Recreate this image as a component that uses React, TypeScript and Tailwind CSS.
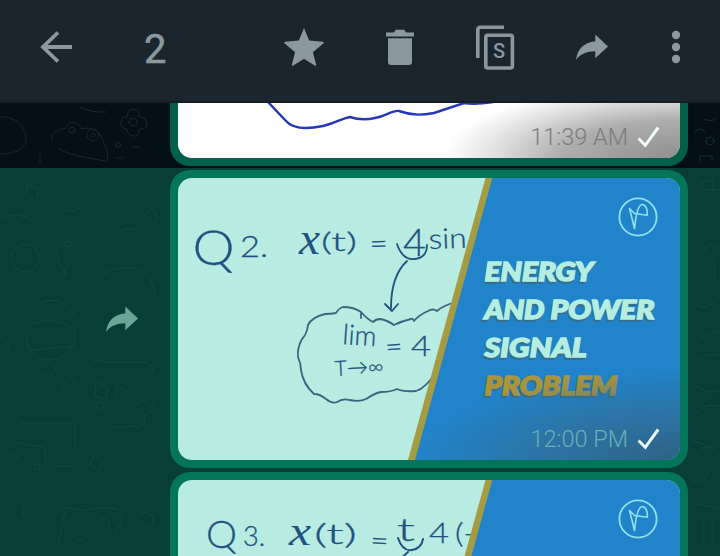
import React from "react";

const INK = "#1f5280";

function Doodles({ className = "", stroke }: { className?: string; stroke: string }) {
  return (
    <svg className={`pointer-events-none absolute inset-0 ${className}`} width="720" height="556" viewBox="0 0 720 556" fill="none" stroke={stroke} strokeWidth="1" strokeLinecap="round">
      <g stroke="#2b3f48">
        <path d="M0 117c14-1 25 8 26 22 0 8-8 15-26 15" />
        <path d="M52 140c-2-8 6-10 14-12 3-9 14-6 15 1 6-2 18 0 20 8 5 9 10 24 4 24-15-3-34-5-46-12M80 107q12 6 26 5" />
        <circle cx="93" cy="135" r="6" /><circle cx="93" cy="135" r="2" /><circle cx="72" cy="130" r="3" />
        <path d="M134 109q6 1 5 8 8 0 8 7-1 6-8 5 0 8-6 7-6-1-6-7-7 0-6-7 1-6 6-5 0-8 7-8z" />
        <circle cx="133" cy="122" r="4" /><circle cx="118" cy="145" r="2.5" /><path d="M132 147h7M116 157q4 3 7 0M40 154v9" />
      </g>
      <path d="M28 184l12 5-4 12-10-5zM60 207q12 9 22-1M115 235q8-10 22-5M145 216l8-9 5 13-10 5M3 218q13-8 29 3" />
      <circle cx="68" cy="244" r="3" /><circle cx="25" cy="258" r="14" /><path d="M56 249q2 16 10 25M65 276q0-13 12-16M98 281c6-15 42-20 52-1q5 8 5 15" />
      <path d="M36 306c12-11 33-5 38 9M26 331c2-15 48-12 49 2 0 33-47 38-49 4M28 350q22-1 45-4M0 335q11 8 10 20" />
      <path d="M91 365q4-7 13-3l40 0q9 0 9 10M43 374q12 4 13-7M62 388l7-11 8 8M96 382l12 5-2 12-11-3zM115 398l2-12 12 7M136 403q13-6 14 5" />
      <path d="M106 421q8 11 24 5 16 4 15-10 11-6 9-18M21 423h51q4 0 3 8v14M17 443l27 4q2 0 2 18M55 466h17" />
      <circle cx="100" cy="406" r="4" /><circle cx="37" cy="467" r="3" /><path d="M94 456l10 5-5 9-9-4zM11 453l8 5-5 6M64 508q10 0 20 3c16-6 38-4 38 3q0 12-7 20M65 511l-7 34M23 507v9M140 513q15-3 13 10l-10 8M97 521q12-7 13 7M74 543q6-7 11 0" />
      <path d="M704 119q9 4 12-1M695 132q6-6 10 0" /><circle cx="710" cy="141" r="4" /><path d="M700 161v-5h12v5M702 190h17M700 184l13-5v13M714 258v24M704 251q6-13 14-2M695 303q8 9 20-1M700 338l18-7M694 363q12-11 26-8M697 386q10 9 23 4" />
      <path d="M697 413q10-12 23-6M690 439l24 10M697 455c7-14 21-10 22 2M691 479q9 9 18-8M696 504l22 4M704 520v26M712 518v24" />
    </svg>
  );
}

function ForwardArrow({ className = "" }: { className?: string }) {
  return (
    <svg className={className} width="34" height="28" viewBox="0 0 34 28" fill="currentColor">
      <path d="M20.3 1.5 33 13.6 20.3 25.3v-7C11.5 18.4 5.5 21 1 27 2.3 16.3 8.5 9.6 20.3 8.3z" />
    </svg>
  );
}

function Header() {
  return (
    <header className="relative z-20 h-[103px] shrink-0 border-b-2 border-[#161d26] bg-[#1b252d] text-[#8b989f]">
      <div className="flex h-[94px] items-center">
        <svg className="ml-10" width="33" height="32" viewBox="0 0 33 32" fill="none" stroke="currentColor" strokeWidth="3.8">
          <path d="M18 1.5 3 16 18 30.5M2 16h30" />
        </svg>
        <span className="ml-[71px] w-6 pt-[5px] text-[40px] leading-none [-webkit-text-stroke:0.5px_currentColor]">2</span>
        <svg className="ml-[116px]" width="40" height="40" viewBox="0 0 40 40" fill="currentColor">
          <path d="m20 1 5.1 12.6 13.6 1.1c1.1.1 1.2 1 .5 1.7L28.9 25.2l3.2 12.2c.3 1.1-.6 1.7-1.5 1.1L20 31.8 9.4 38.5c-.9.6-1.8 0-1.5-1.1l3.2-12.2L.8 16.4c-.7-.7-.5-1.6.5-1.7l13.6-1.1z" />
        </svg>
        <svg className="ml-[61px]" width="30" height="38" viewBox="0 0 30 38" fill="currentColor">
          <path d="M1 4.5h7.8L11 1.7h8l2.2 2.8H29v4H1zM3 10.2h24V34q0 3-3 3H6q-3 0-3-3z" />
        </svg>
        <svg className="ml-[60px]" width="40" height="46" viewBox="0 0 40 46" fill="none" stroke="currentColor" strokeWidth="3.6">
          <path d="M2.8 34V6q0-2.8 2.8-2.8H29" />
          <rect x="10.8" y="11.2" width="26.6" height="32.8" rx="2" />
          <text x="24" y="34" textAnchor="middle" fill="currentColor" stroke="none" fontFamily="Roboto, sans-serif" fontSize="20" fontWeight="500">S</text>
        </svg>
        <ForwardArrow className="ml-[60px]" />
        <svg className="ml-[62px]" width="10" height="34" viewBox="0 0 10 34" fill="currentColor">
          <circle cx="5" cy="5" r="4.2" /><circle cx="5" cy="17" r="4.2" /><circle cx="5" cy="29" r="4.2" />
        </svg>
      </div>
    </header>
  );
}

function Stamp({ time, color }: { time: string; color: string }) {
  return (
    <div className="absolute right-[20px] bottom-[8px] flex items-center gap-[9px]">
      <span className={`text-[23.5px] leading-[26px] font-light whitespace-nowrap ${color}`}>{time}</span>
      <svg width="23" height="22" viewBox="0 0 23 22" fill="none" stroke="#eefcf9" strokeWidth="3">
        <path d="m1.5 12.5 6.8 6.8L21.2 1.5" />
      </svg>
    </div>
  );
}

function Logo() {
  return (
    <g fill="none" stroke="#8fe3ee" strokeLinecap="round" strokeLinejoin="round">
      <circle cx="638" cy="217" r="18.6" strokeWidth="1.8" />
      <path strokeWidth="1.6" d="M634.5 228.5 629.5 208.5 634.5 213.5 647.2 215.2C648 209 645.5 204.5 642 204.5 637.5 205.5 635.5 218 634.5 228.5" />
    </g>
  );
}

type InkTextProps = { x: number; y: number; size: number; length: number; children: string; serif?: boolean; rotate?: number };

function Ink({ x, y, size, length, children, serif, rotate = 0 }: InkTextProps) {
  return (
    <text
      x={x}
      y={y}
      fontSize={size}
      textLength={length}
      lengthAdjust="spacingAndGlyphs"
      fontFamily={serif ? "'Liberation Serif', serif" : "Lato, 'DejaVu Sans', sans-serif"}
      fontWeight={serif ? 400 : 300}
      fontStyle={serif ? "italic" : "normal"}
      fill={INK}
      stroke={INK}
      strokeWidth={serif ? 0 : 0.3}
      transform={`rotate(${rotate} ${x} ${y})`}
    >
      {children}
    </text>
  );
}

const titles = [
  { words: [{ text: "ENERGY", x: 484, length: 109 }], y: 281, color: "#b3eee0" },
  { words: [{ text: "AND", x: 484, length: 60 }, { text: "POWER", x: 550, length: 104 }], y: 319, color: "#b3eee0" },
  { words: [{ text: "SIGNAL", x: 484, length: 102 }], y: 357, color: "#b3eee0" },
  { words: [{ text: "PROBLEM", x: 484, length: 133 }], y: 395, color: "#a8953e" },
];

function Titles() {
  return (
    <g fontFamily="Lato, sans-serif" fontWeight="900" fontStyle="italic" fontSize="26.5">
      {titles.map((line) =>
        line.words.map((w) => (
          <g key={w.text}>
            <text x={w.x - 0.5} y={line.y + 1.5} textLength={w.length} lengthAdjust="spacingAndGlyphs" fill="#366e8b" stroke="#366e8b" strokeWidth="1.6">{w.text}</text>
            <text x={w.x + 0.5} y={line.y} textLength={w.length} lengthAdjust="spacingAndGlyphs" fill={line.color} stroke={line.color} strokeWidth="1.5">{w.text}</text>
          </g>
        )),
      )}
    </g>
  );
}

function Slide({ question }: { question: 2 | 3 }) {
  return (
    <svg className="block" width="502" height="282" viewBox="178 178 502 282">
      <rect x="178" y="178" width="502" height="282" fill="#b8ebe2" />
      {question === 2 ? (
        <g>
          <Ink x={192} y={264} size={48} length={42} rotate={2}>Q</Ink>
          <Ink x={240} y={257} size={29} length={28}>2.</Ink>
          <Ink x={299} y={254} size={46} length={21} serif>x</Ink>
          <Ink x={321} y={251} size={25} length={36}>(t)</Ink>
          <Ink x={370} y={254} size={29} length={18} rotate={-2}>=</Ink>
          <Ink x={403} y={256} size={37} length={23}>4</Ink>
          <Ink x={429} y={249} size={28} length={38} rotate={-2}>sin</Ink>
          <Ink x={342} y={344} size={28} length={34} rotate={4}>lim</Ink>
          <Ink x={335} y={376} size={21} length={49} rotate={-3}>T→∞</Ink>
          <Ink x={386} y={357} size={28} length={17} rotate={-4}>=</Ink>
          <Ink x={411} y={356} size={28} length={20}>4</Ink>
          <g fill="none" stroke={INK} strokeWidth="1.8" strokeLinecap="round" strokeLinejoin="round">
            <path d="M397 244c4 12 10 16 18 15 8-1 12-6 12-14M407 261c-12 11-16 27-16 47M385 304l7 7 6-7" />
            <path stroke="#3a6580" d="M456 302Q444 305 437 311 433 308 428 311 419 315 414 321 413 318 411 319 402 321 394 325 387 320 380 319 376 319 373 322 367 319 361 312 354 307 343 307 339 308 336 313 331 314 325 314 312 317 308 325 307 334 302 339 297 348 298 357 301 364 301 370 303 384 314 394 320 394 326 399 332 404 337 402 343 398 349 400 360 402 366 399 375 393 381 392 391 392 397 389 403 392 416 391 426 388 436 372M361 312V318" />
          </g>
        </g>
      ) : (
        <g>
          <Ink x={206} y={246} size={37} length={31}>Q</Ink>
          <Ink x={243} y={244} size={28} length={22}>3.</Ink>
          <Ink x={289} y={243} size={43} length={22} serif>x</Ink>
          <Ink x={314} y={242} size={27} length={43}>(t)</Ink>
          <Ink x={370} y={248} size={28} length={18} rotate={3}>=</Ink>
          <Ink x={397} y={239} size={32} length={18}>t</Ink>
          <Ink x={429} y={241} size={27} length={20}>4</Ink>
          <Ink x={455} y={241} size={27} length={21}>(-</Ink>
          <path d="M398 236c3 9 8 13 14 12 6-1 10-5 11-11M408 250l-10 9" fill="none" stroke={INK} strokeWidth="2" strokeLinecap="round" />
        </g>
      )}
      <path d="M490 178H680V460H413z" fill="#2183c9" />
      <path d="M485.5 178h6.8L415 460h-7z" fill="#a59b43" />
      <Logo />
      {question === 2 && <Titles />}
    </svg>
  );
}

export default function App() {
  return (
    <div className="relative flex h-[556px] w-[720px] flex-col overflow-hidden bg-[#050f18] font-['Roboto',sans-serif]">
      <Header />
      <main className="relative flex flex-1 flex-col">
        <section className="relative z-10 flex h-[65px] justify-start pl-[170px]">
          <div className="h-[63px] w-[518px] rounded-b-[20px] bg-[#03604a] px-2 pb-2">
            <div className="relative h-[55px] overflow-hidden rounded-b-[14px] bg-white">
              <div className="absolute inset-0 bg-[radial-gradient(ellipse_235px_75px_at_100%_100%,#8f8f8f_0%,#adadad_50%,#dedede_78%,transparent_100%)]" />
              <svg className="absolute inset-0" width="502" height="55" viewBox="178 103 502 55" fill="none" stroke="#2536b6" strokeWidth="2.4">
                <path d="M268 102 286 121C292 128 304 130 323 126 336 123 343 118 350 117 356 119 366 120 375 118 387 116 392 110 399 111 413 116 423 115 434 113L464 103Q475 105 493 102" />
              </svg>
              <Stamp time="11:39 AM" color="text-[#7c7c7c]" />
            </div>
          </div>
        </section>
        <section className="relative flex flex-1 bg-[#073e37]">
          <div className="flex w-[170px] justify-end pt-[137px] pr-[31px] text-[#6aa597]">
            <ForwardArrow />
          </div>
          <div className="relative z-10 mt-[2px] flex h-[386px] w-[518px] flex-col gap-1 overflow-hidden">
            <div className="h-[298px] shrink-0 rounded-[20px] bg-[#04745a] p-2">
              <div className="relative h-[282px] overflow-hidden rounded-[14px]">
                <Slide question={2} />
                <div className="absolute right-0 bottom-0 h-[88px] w-[260px] bg-[radial-gradient(ellipse_at_100%_100%,#315f7fe8_0%,#326c918c_43%,transparent_72%)]" />
                <Stamp time="12:00 PM" color="text-[#6bb0b8]" />
              </div>
            </div>
            <div className="h-[298px] shrink-0 rounded-[20px] bg-[#04745a] p-2">
              <div className="h-[282px] overflow-hidden rounded-[14px]">
                <Slide question={3} />
              </div>
            </div>
          </div>
        </section>
      </main>
      <Doodles className="z-0 opacity-50" stroke="#1e544d" />
    </div>
  );
}
